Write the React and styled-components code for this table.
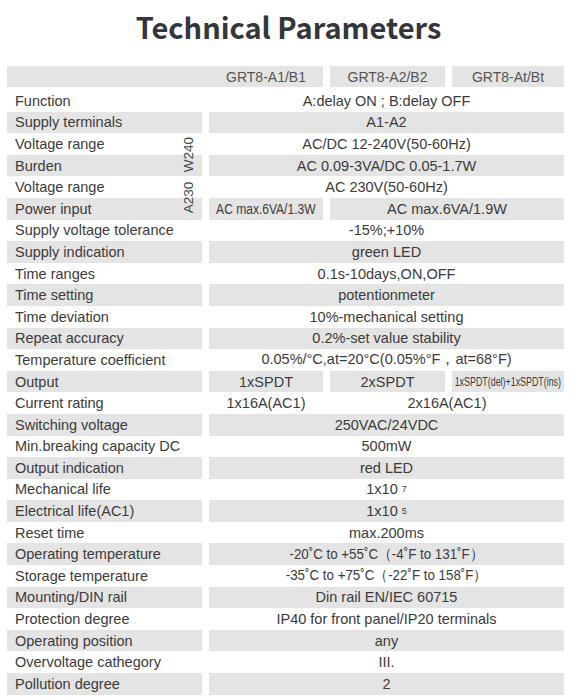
import React from "react";
import styled, { createGlobalStyle } from "styled-components";

const GlobalStyle = createGlobalStyle`
  html, body {
    margin: 0;
    padding: 0;
    background: #ffffff;
  }
  body {
    font-family: "Liberation Sans", Arial, sans-serif;
    color: #3a3a3a;
  }
`;

const Page = styled.div`
  width: 577px;
  padding: 12px 0 0 7px;
  box-sizing: border-box;
`;

const Title = styled.h1`
  margin: 0 0 25px;
  padding-right: 7px;
  font-family: "Noto Sans CJK SC", "Noto Sans", sans-serif;
  font-weight: 700;
  font-size: 29px;
  line-height: 1;
  text-align: center;
  color: #33363a;
`;

const Table = styled.div`
  display: flex;
  flex-direction: column;
  width: 557px;
`;

const Row = styled.div`
  display: grid;
  grid-template-columns: 195px 114px 115px 112px;
  column-gap: 7px;
  height: ${(p) => p.$h || 21.6}px;
  margin-bottom: ${(p) => p.$after || 0}px;
`;

const Cell = styled.div`
  position: relative;
  grid-column: span ${(p) => p.$span || 1};
  display: flex;
  align-items: center;
  justify-content: center;
  background: ${(p) => (p.$shade ? "#e4e4e4" : "transparent")};
  font-size: 14.5px;
  white-space: nowrap;
  color: #3b3b3b;
`;

const Label = styled(Cell)`
  justify-content: flex-start;
  padding-left: 8px;
`;

const HeadCell = styled(Cell)`
  background: #e4e4e4;
  color: #555;
  font-size: 14px;
  padding-left: ${(p) => p.$offset || 0}px;
`;

const Narrow = styled.span`
  display: inline-block;
  font-size: ${(p) => p.$size || 14}px;
  transform: scaleX(${(p) => p.$sx || 0.88});
`;

const Tag = styled.div`
  position: absolute;
  z-index: 1;
  right: 6px;
  top: 0;
  height: 43.2px;
  display: flex;
  align-items: center;
  justify-content: center;
  writing-mode: vertical-rl;
  transform: rotate(180deg);
  font-size: 13.5px;
  color: #444;
`;

const Sup = styled.sup`
  font-size: 9px;
  margin-left: 4px;
  vertical-align: 8px;
`;

const rows = [
  { label: "Function", cells: [{ span: 3, text: "A:delay ON ; B:delay OFF" }] },
  { label: "Supply terminals", cells: [{ span: 3, text: "A1-A2" }] },
  { label: "Voltage range", tag: "W240", cells: [{ span: 3, text: "AC/DC 12-240V(50-60Hz)" }] },
  { label: "Burden", cells: [{ span: 3, text: "AC 0.09-3VA/DC 0.05-1.7W" }] },
  { label: "Voltage range", tag: "A230", cells: [{ span: 3, text: "AC 230V(50-60Hz)" }] },
  {
    label: "Power input",
    cells: [
      { span: 1, text: <Narrow $size={14} $sx={0.86}>AC max.6VA/1.3W</Narrow> },
      { span: 2, text: "AC max.6VA/1.9W" },
    ],
  },
  { label: "Supply voltage tolerance", cells: [{ span: 3, text: "-15%;+10%" }] },
  { label: "Supply indication", cells: [{ span: 3, text: "green LED" }] },
  { label: "Time ranges", cells: [{ span: 3, text: "0.1s-10days,ON,OFF" }] },
  { label: "Time setting", cells: [{ span: 3, text: "potentionmeter" }] },
  { label: "Time deviation", cells: [{ span: 3, text: "10%-mechanical setting" }] },
  { label: "Repeat accuracy", cells: [{ span: 3, text: "0.2%-set value stability" }] },
  {
    label: "Temperature coefficient",
    cells: [{ span: 3, text: "0.05%/°C,at=20°C(0.05%°F，at=68°F)" }],
  },
  {
    label: "Output",
    cells: [
      { span: 1, text: "1xSPDT" },
      { span: 1, text: "2xSPDT" },
      { span: 1, text: <Narrow $size={12} $sx={0.74}>1xSPDT(del)+1xSPDT(ins)</Narrow> },
    ],
  },
  {
    label: "Current rating",
    cells: [
      { span: 1, text: "1x16A(AC1)" },
      { span: 2, text: "2x16A(AC1)" },
    ],
  },
  { label: "Switching voltage", cells: [{ span: 3, text: "250VAC/24VDC" }] },
  { label: "Min.breaking capacity DC", cells: [{ span: 3, text: "500mW" }] },
  { label: "Output indication", cells: [{ span: 3, text: "red LED" }] },
  { label: "Mechanical life", cells: [{ span: 3, text: <>1x10<Sup>7</Sup></> }] },
  { label: "Electrical life(AC1)", cells: [{ span: 3, text: <>1x10<Sup>5</Sup></> }] },
  { label: "Reset time", cells: [{ span: 3, text: "max.200ms" }] },
  {
    label: "Operating temperature",
    cells: [{ span: 3, text: <Narrow $size={14.5} $sx={0.92}>-20˚C to +55˚C（-4˚F to 131˚F）</Narrow> }],
  },
  {
    label: "Storage temperature",
    cells: [{ span: 3, text: <Narrow $size={14.5} $sx={0.92}>-35˚C to +75˚C（-22˚F  to 158˚F）</Narrow> }],
  },
  { label: "Mounting/DIN rail", cells: [{ span: 3, text: "Din rail EN/IEC 60715" }] },
  {
    label: "Protection degree",
    cells: [{ span: 3, text: "IP40 for front panel/IP20 terminals" }],
  },
  { label: "Operating position", cells: [{ span: 3, text: "any" }] },
  { label: "Overvoltage cathegory", cells: [{ span: 3, text: "III." }] },
  { label: "Pollution degree", cells: [{ span: 3, text: "2" }] },
];

export default function App() {
  return (
    <>
      <GlobalStyle />
      <Page>
        <Title>Technical Parameters</Title>
        <Table>
          <Row $h={21} $after={3}>
            <HeadCell $span={2} $offset={202}>GRT8-A1/B1</HeadCell>
            <HeadCell>GRT8-A2/B2</HeadCell>
            <HeadCell>GRT8-At/Bt</HeadCell>
          </Row>
          {rows.map((row, i) => {
            const shade = i % 2 === 1;
            return (
              <Row key={i}>
                <Label $shade={shade}>
                  {row.label}
                  {row.tag && <Tag>{row.tag}</Tag>}
                </Label>
                {row.cells.map((c, j) => (
                  <Cell key={j} $span={c.span} $shade={shade}>
                    {c.text}
                  </Cell>
                ))}
              </Row>
            );
          })}
        </Table>
      </Page>
    </>
  );
}
